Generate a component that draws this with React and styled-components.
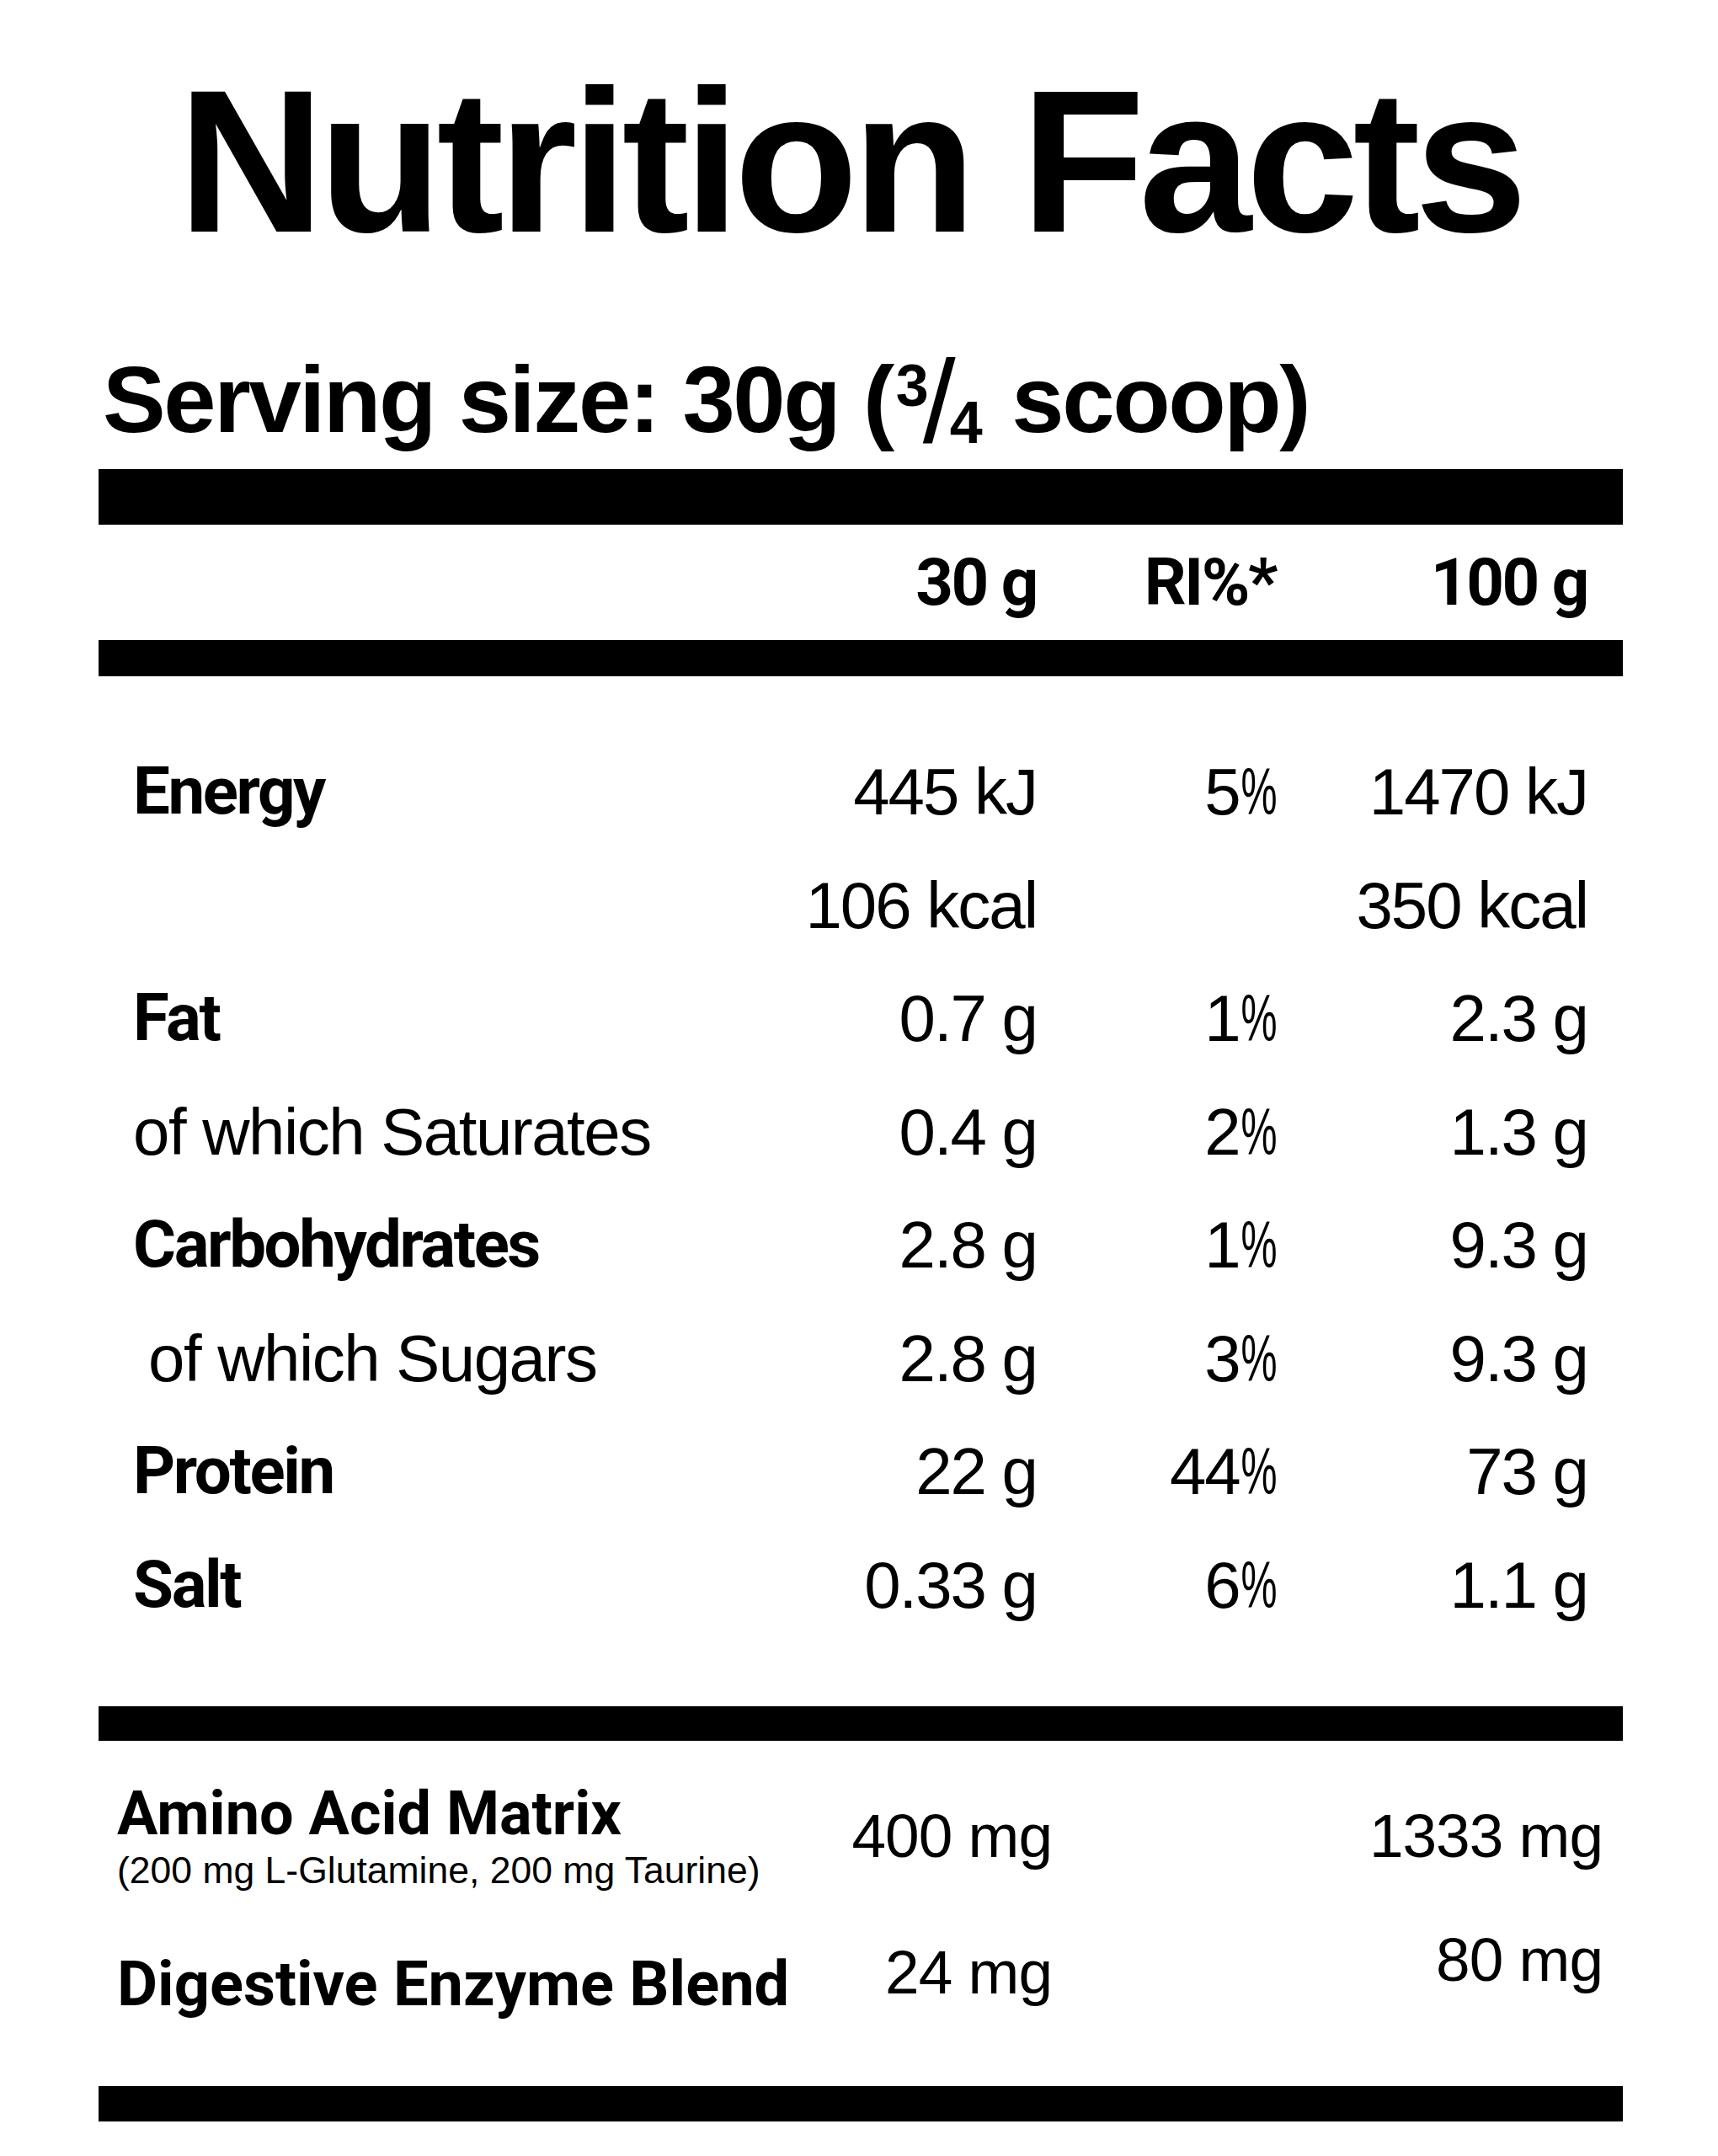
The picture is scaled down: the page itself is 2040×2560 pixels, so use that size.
import React from 'react';
import styled, { createGlobalStyle } from 'styled-components';

const rows = [
  { label: 'Energy', bold: true, a: '445 kJ', ri: '5', b: '1470 kJ' },
  { label: '', a: '106 kcal', ri: null, b: '350 kcal' },
  { label: 'Fat', bold: true, a: '0.7 g', ri: '1', b: '2.3 g' },
  { label: 'of which Saturates', a: '0.4 g', ri: '2', b: '1.3 g' },
  { label: 'Carbohydrates', bold: true, a: '2.8 g', ri: '1', b: '9.3 g' },
  { label: 'of which Sugars', indent: true, a: '2.8 g', ri: '3', b: '9.3 g' },
  { label: 'Protein', bold: true, a: '22 g', ri: '44', b: '73 g' },
  { label: 'Salt', bold: true, a: '0.33 g', ri: '6', b: '1.1 g' },
];

function App() {
  return (
    <Page>
      <GlobalStyle />
      <Title>Nutrition Facts</Title>
      <Serving>
        Serving size: 30g (
        <Fraction>
          <Num>3</Num>
          <Slash>/</Slash>
          <Den>4</Den>
        </Fraction>{' '}
        scoop)
      </Serving>
      <Bar $h={66} $top={26} />
      <HeadRow>
        <span />
        <HeadCell>30 g</HeadCell>
        <HeadCell>RI%*</HeadCell>
        <HeadCell>100 g</HeadCell>
      </HeadRow>
      <Bar $h={43} />
      <Table>
        {rows.map((row, i) => (
          <Row key={i}>
            <Label $bold={row.bold} $indent={row.indent}>
              {row.label}
            </Label>
            <Value>{row.a}</Value>
            <Value>
              {row.ri !== null && (
                <>
                  {row.ri}
                  <Pct>%</Pct>
                </>
              )}
            </Value>
            <Value>{row.b}</Value>
          </Row>
        ))}
      </Table>
      <Bar $h={41} />
      <Extras>
        <ExtraRow>
          <div>
            <ExtraName>Amino Acid Matrix</ExtraName>
            <ExtraNote>(200 mg L-Glutamine, 200 mg Taurine)</ExtraNote>
          </div>
          <ExtraValue $dy={25}>400 mg</ExtraValue>
          <span />
          <ExtraValue $dy={25}>1333 mg</ExtraValue>
        </ExtraRow>
        <ExtraRow $gap={77}>
          <ExtraName $size={74}>Digestive Enzyme Blend</ExtraName>
          <ExtraValue $dy={-15}>24 mg</ExtraValue>
          <span />
          <ExtraValue $dy={-30}>80 mg</ExtraValue>
        </ExtraRow>
      </Extras>
      <Bar $h={42} />
    </Page>
  );
}

export default App;

const GlobalStyle = createGlobalStyle`
  html, body {
    margin: 0;
    padding: 0;
    background: #ffffff;
  }
`;

const Page = styled.div`
  width: 1810px;
  padding: 71px 113px 42px 117px;
  background: #ffffff;
  color: #000000;
  font-family: 'Liberation Sans', Arial, sans-serif;
`;

const Title = styled.h1`
  margin: 0;
  padding-right: 26px;
  text-align: center;
  font-size: 241px;
  line-height: 241px;
  font-weight: 700;
  letter-spacing: -7px;
`;

const Serving = styled.div`
  margin-top: 107px;
  height: 112px;
  padding-left: 5px;
  font-size: 112px;
  line-height: 112px;
  font-weight: 700;
  letter-spacing: -2.4px;
  white-space: nowrap;
`;

const Fraction = styled.span`
  display: inline-flex;
  vertical-align: top;
  box-sizing: border-box;
  height: 112px;
  padding-top: 4px;
  margin: 0 6px 0 4px;
  letter-spacing: 0;
`;

const Num = styled.span`
  font-size: 70px;
  line-height: 70px;
`;

const Slash = styled.span`
  font-size: 140px;
  line-height: 108px;
  font-weight: 400;
  margin: 0 -7px;
`;

const Den = styled.span`
  align-self: flex-end;
  font-size: 70px;
  line-height: 58px;
`;

const Bar = styled.div`
  height: ${p => p.$h}px;
  margin-top: ${p => p.$top || 0}px;
  background: #000000;
`;

const columns = `
  display: grid;
  grid-template-columns: minmax(0, 1fr) 400px 284px 370px;
`;

const HeadRow = styled.div`
  ${columns}
  padding: 0 42px 0 41px;
  height: 137px;
  line-height: 137px;
`;

const HeadCell = styled.span`
  text-align: right;
  font-family: Roboto, 'Liberation Sans', sans-serif;
  font-size: 78px;
  font-weight: 700;
  letter-spacing: -2.4px;
`;

const Table = styled.div`
  padding: 70px 42px 77px 41px;
`;

const Row = styled.div`
  ${columns}
  height: 134.5px;
  line-height: 134.5px;
`;

const Label = styled.span`
  padding-left: ${p => (p.$indent ? 18 : 0)}px;
  font-family: ${p => (p.$bold ? "Roboto, 'Liberation Sans', sans-serif" : "'Liberation Sans', Arial, sans-serif")};
  font-size: 78px;
  font-weight: ${p => (p.$bold ? 700 : 400)};
  letter-spacing: ${p => (p.$bold ? -2.4 : -1.5)}px;
  white-space: nowrap;
`;

const Value = styled.span`
  text-align: right;
  font-size: 78px;
  letter-spacing: -2px;
  white-space: nowrap;
`;

const Pct = styled.span`
  display: inline-block;
  transform: scaleX(0.62);
  transform-origin: right center;
  margin-left: -24px;
`;

const Extras = styled.div`
  padding: 51px 24px 85px 22px;
`;

const ExtraRow = styled.div`
  ${columns}
  align-items: start;
  margin-top: ${p => p.$gap || 0}px;
`;

const ExtraName = styled.div`
  font-family: Roboto, 'Liberation Sans', sans-serif;
  font-size: ${p => p.$size || 72}px;
  line-height: 72px;
  font-weight: 700;
  white-space: nowrap;
`;

const ExtraNote = styled.div`
  margin-top: 9px;
  font-size: 44.5px;
  line-height: 44px;
  white-space: nowrap;
`;

const ExtraValue = styled.div`
  margin-top: ${p => p.$dy}px;
  text-align: right;
  font-size: 73px;
  line-height: 73px;
  letter-spacing: -1px;
  white-space: nowrap;
`;
